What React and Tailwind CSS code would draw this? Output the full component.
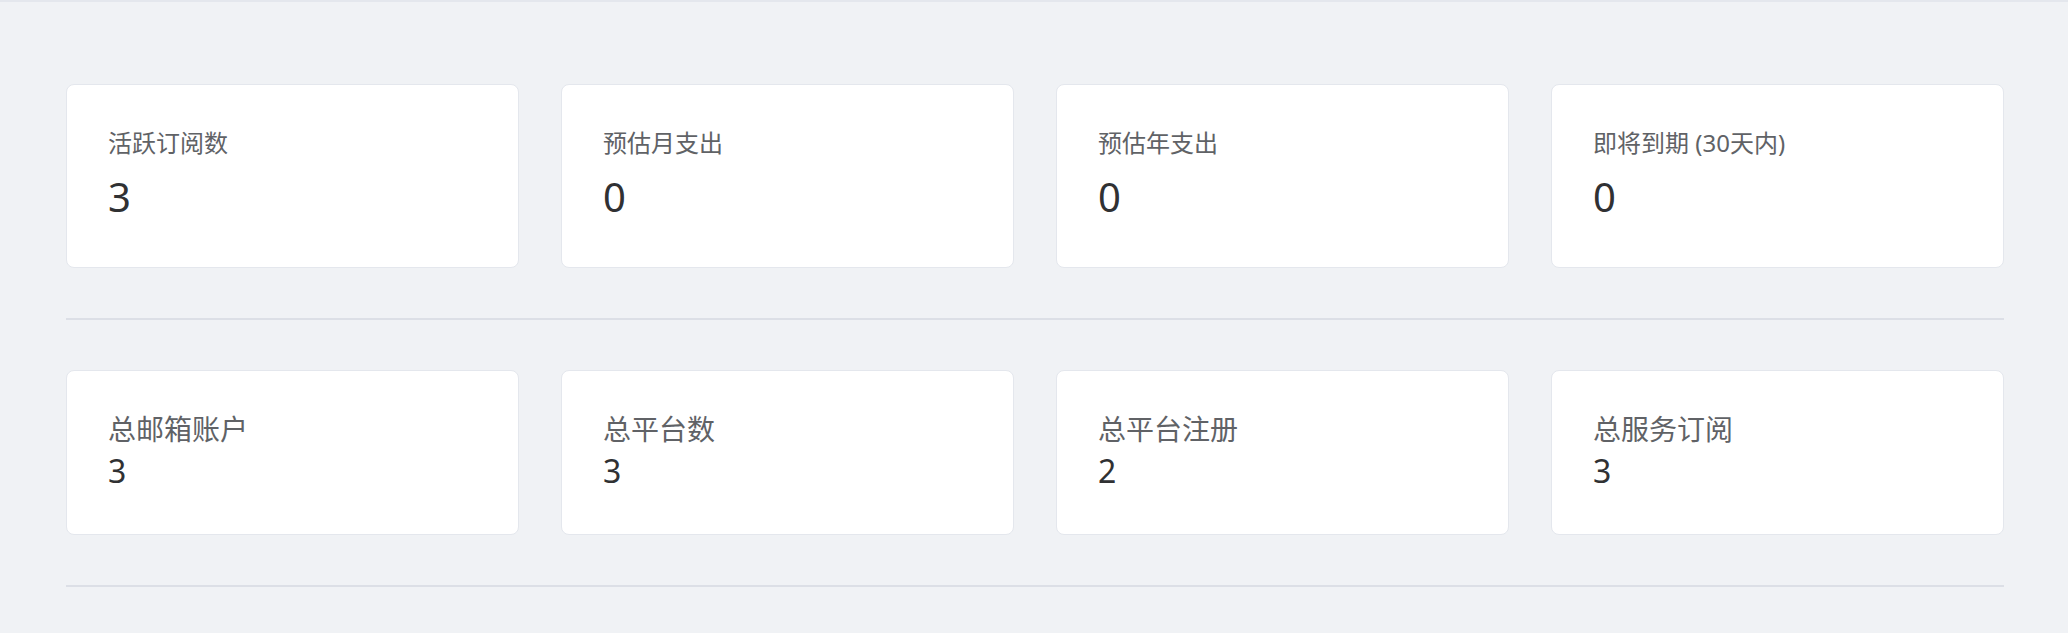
const TOP_STATS = [
  { label: '活跃订阅数', value: 3 },
  { label: '预估月支出', value: 0 },
  { label: '预估年支出', value: 0 },
  { label: '即将到期 (30天内)', value: 0 },
]

const TOTALS = [
  { label: '总邮箱账户', value: 3 },
  { label: '总平台数', value: 3 },
  { label: '总平台注册', value: 2 },
  { label: '总服务订阅', value: 3 },
]

const font = { fontFamily: '"Noto Sans", "Noto Sans CJK SC", sans-serif' }

function Card({ children }) {
  return (
    <div className="bg-white border border-[#e4e7ed] rounded-lg px-[41px] pt-[40px]">
      {children}
    </div>
  )
}

function Divider() {
  return <div className="h-[2px] bg-[#dcdfe6] my-[50px]" />
}

export default function App() {
  return (
    <div className="min-h-screen bg-[#f0f2f5] border-t-2 border-[#e4e7ed]" style={font}>
      <div className="pl-[66px] pr-[64px] pt-[82px]">
        <div className="grid grid-cols-4 gap-[42px]">
          {TOP_STATS.map(s => (
            <Card key={s.label}>
              <div className="text-[24px] leading-[36px] text-[#606266]">{s.label}</div>
              <div className="mt-[6px] text-[40px] leading-[60px] text-[#303133] pb-[40px]">{s.value}</div>
            </Card>
          ))}
        </div>

        <Divider />

        <div className="grid grid-cols-4 gap-[42px]">
          {TOTALS.map(s => (
            <Card key={s.label}>
              <div className="text-[28px] leading-[37px] text-[#606266]">{s.label}</div>
              <div className="text-[32px] leading-[46px] text-[#303133] pb-[40px]">{s.value}</div>
            </Card>
          ))}
        </div>

        <Divider />
      </div>
    </div>
  )
}
